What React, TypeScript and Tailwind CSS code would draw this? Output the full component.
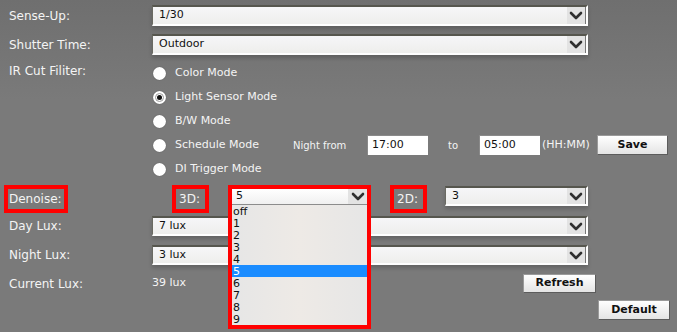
import React from "react";

function Chevron() {
  return (
    <svg width="14" height="9" viewBox="0 0 14 9" aria-hidden="true">
      <polyline points="2,2 7,7 12,2" fill="none" stroke="#2f2f2f" strokeWidth="2.6" strokeLinecap="round" strokeLinejoin="round" />
    </svg>
  );
}

function Select({ value, className = "" }: { value: string; className?: string }) {
  return (
    <div
      className={`flex items-stretch border-t-2 border-l border-t-[#56564e] border-l-[#6a6a62] border-r-2 border-b-2 border-r-white border-b-white bg-[linear-gradient(#f6f6f8,#eeeeec)] shadow-[0_3px_4px_rgba(0,0,0,0.18)] ${className}`}
    >
      <span className="flex-1 flex items-center pl-[6px] text-[11px] text-[#111]">{value}</span>
      <span className="w-[19px] flex items-center justify-center bg-[#e3e3e3] border-r border-r-[#777]">
        <Chevron />
      </span>
    </div>
  );
}

function Radio({ checked = false }: { checked?: boolean }) {
  return (
    <span className="w-[13px] h-[13px] rounded-full bg-white flex items-center justify-center shadow-[0_0_1px_rgba(0,0,0,0.5)]">
      {checked && (
        <span className="w-[9px] h-[9px] rounded-full border border-[#9a9a9a] flex items-center justify-center">
          <span className="w-[5px] h-[5px] rounded-full bg-[#111]" />
        </span>
      )}
    </span>
  );
}

function Button({ label, className = "" }: { label: string; className?: string }) {
  return (
    <div
      className={`flex items-center justify-center border border-[#9a9a9a] border-r-[#5c5c5c] border-b-[#5c5c5c] bg-[linear-gradient(#ffffff,#e4e4e4)] text-[11px] font-bold text-[#111] ${className}`}
    >
      {label}
    </div>
  );
}

function TimeInput({ value }: { value: string }) {
  return (
    <div className="w-[61px] h-[20px] flex items-center pl-[4px] bg-white border-t border-l border-t-[#8a8a8a] border-l-[#8a8a8a] text-[11px] text-[#111]">
      {value}
    </div>
  );
}

const options = ["off", "1", "2", "3", "4", "5", "6", "7", "8", "9"];

export default function App() {
  const radios = ["Color Mode", "Light Sensor Mode", "B/W Mode", "Schedule Mode", "DI Trigger Mode"];
  return (
    <div className="relative w-[677px] h-[332px] overflow-hidden bg-[linear-gradient(#6f6f6f,#7a7a7a_30%,#7a7a7a)] font-['DejaVu_Sans',Verdana,sans-serif] text-[11px] text-[#f4f4f4]">
      <div className="flex flex-col pt-[5px]">
        <div className="flex items-center h-[21px]">
          <span className="w-[152px] pl-[9px] text-[12px]">Sense-Up:</span>
          <Select value="1/30" className="w-[436px] h-[21px]" />
        </div>
        <div className="flex items-center h-[21px] mt-[8px]">
          <span className="w-[152px] pl-[9px] text-[12px]">Shutter Time:</span>
          <Select value="Outdoor" className="w-[436px] h-[21px]" />
        </div>

        <div className="flex mt-[6px]">
          <div className="w-[152px] pl-[9px] h-[20px] flex items-center text-[12px]">IR Cut Filiter:</div>
          <div className="flex flex-col">
            {radios.map((r, i) => (
              <div key={r} className="flex items-center h-[24px]">
                <div className="w-[141px] flex items-center">
                  <span className="ml-[1px]">
                    <Radio checked={i === 1} />
                  </span>
                  <span className="ml-[9px]">{r}</span>
                </div>
                {i === 3 && (
                  <div className="flex items-center">
                    <span className="w-[74px] text-[10px]">Night from</span>
                    <TimeInput value="17:00" />
                    <span className="ml-[20px] w-[31px] text-[10px]">to</span>
                    <TimeInput value="05:00" />
                    <span className="ml-[2px] w-[55px]">(HH:MM)</span>
                    <Button label="Save" className="w-[71px] h-[20px]" />
                  </div>
                )}
              </div>
            ))}
          </div>
        </div>

        <div className="flex items-start h-[28px] mt-[4px] text-[12px]">
          <div className="ml-[4px] w-[64px] h-[28px] border-4 border-[#ff0000] flex items-center pl-[1px]">Denoise:</div>
          <div className="ml-[104px] w-[37px] h-[28px] border-4 border-[#ff0000] flex items-center pl-[3px]">3D:</div>
          <div className="relative ml-[19px] w-[143px] h-[28px]">
            <div className="absolute left-0 top-0 z-10 w-[143px] border-4 border-[#ff0000] bg-[#ececec]">
              <div className="flex h-[16px] bg-[linear-gradient(#ffffff,#f0f0f0)] border-b border-b-[#8c8c8c]">
                <span className="flex-1 flex items-center pl-[4px] text-[11px] text-[#111]">5</span>
                <span className="w-[19px] flex items-center justify-center bg-[#e3e3e3]">
                  <Chevron />
                </span>
              </div>
              <div className="flex flex-col bg-[linear-gradient(90deg,#e6e6e6,#eeeae6_50%,#e6e6e6)]">
                {options.map((o) => (
                  <div
                    key={o}
                    className={`h-[12px] flex items-center pl-[1px] text-[11px] leading-none ${
                      o === "5" ? "bg-[#1a8cff] text-white" : "text-[#111]"
                    }`}
                  >
                    {o}
                  </div>
                ))}
              </div>
            </div>
          </div>
          <div className="ml-[19px] w-[37px] h-[28px] border-4 border-[#ff0000] flex items-center pl-[3px]">2D:</div>
          <Select value="3" className="ml-[18px] mt-[1px] w-[143px] h-[20px]" />
        </div>

        <div className="flex items-center h-[20px] mt-[3px]">
          <span className="w-[152px] pl-[9px] text-[12px]">Day Lux:</span>
          <Select value="7 lux" className="w-[436px] h-[20px]" />
        </div>
        <div className="flex items-center h-[20px] mt-[9px]">
          <span className="w-[152px] pl-[9px] text-[12px]">Night Lux:</span>
          <Select value="3 lux" className="w-[436px] h-[20px]" />
        </div>
        <div className="flex items-center h-[19px] mt-[9px]">
          <span className="w-[152px] pl-[9px] text-[12px]">Current Lux:</span>
          <span className="w-[371px]">39 lux</span>
          <Button label="Refresh" className="w-[73px] h-[19px]" />
        </div>
        <div className="flex h-[20px] mt-[7px] pl-[598px]">
          <Button label="Default" className="w-[72px] h-[20px]" />
        </div>
      </div>
    </div>
  );
}
